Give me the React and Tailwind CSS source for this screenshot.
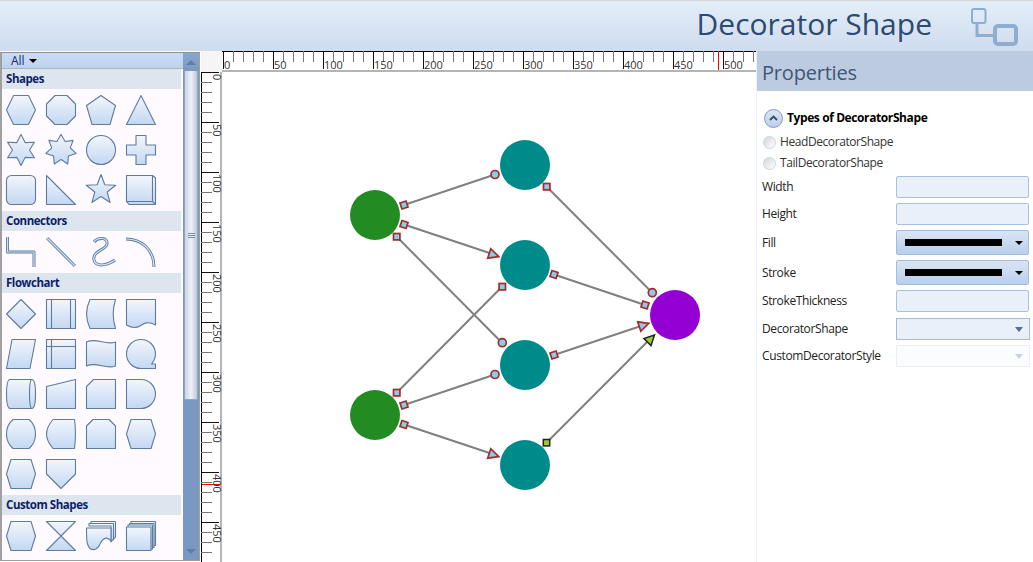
import { useId } from "react";

const UI_FONT = "font-['Open_Sans','Noto_Sans',sans-serif]";

/* Palette shape: children get the gradient through fill */
const Shape = ({ children }) => {
  const id = useId();
  return (
    <svg width="30" height="30" viewBox="0 0 30 30" className="overflow-visible">
      <defs>
        <linearGradient id={id} x1="0" y1="0" x2="0" y2="1">
          <stop offset="0" stopColor="#f3f6fc" />
          <stop offset="1" stopColor="#c3d8f2" />
        </linearGradient>
      </defs>
      <g fill={`url(#${id})`} stroke="#5d7c9f" strokeWidth="1.1" strokeLinejoin="round">
        {children}
      </g>
    </svg>
  );
};

const star = (n, outer, inner) => {
  const pts = [];
  for (let i = 0; i < n * 2; i++) {
    const r = i % 2 === 0 ? outer : inner;
    const a = (Math.PI * i) / n - Math.PI / 2;
    pts.push(`${(15 + r * Math.cos(a)).toFixed(2)},${(15 + r * Math.sin(a)).toFixed(2)}`);
  }
  return pts.join(" ");
};

const Pipe = ({ d }) => (
  <>
    <path d={d} fill="none" stroke="#5d7c9f" strokeWidth="3" />
    <path d={d} fill="none" stroke="#d3e2f5" strokeWidth="1.2" />
  </>
);

const basicShapes = [
  <polygon points="7.5,0.5 22.5,0.5 29.5,15 22.5,29.5 7.5,29.5 0.5,15" />,
  <polygon points="9,0.5 21,0.5 29.5,9 29.5,21 21,29.5 9,29.5 0.5,21 0.5,9" />,
  <polygon points="15,0.5 29.5,10.5 24,29.5 6,29.5 0.5,10.5" />,
  <polygon points="15,0.5 29.5,29.5 0.5,29.5" />,
  <polygon points={star(6, 15.5, 8.5)} />,
  <polygon points={star(7, 15.5, 9.5)} />,
  <circle cx="15" cy="15" r="14.5" />,
  <polygon points="10,0.5 20,0.5 20,10 29.5,10 29.5,20 20,20 20,29.5 10,29.5 10,20 0.5,20 0.5,10 10,10" />,
  <rect x="0.5" y="0.5" width="29" height="29" rx="5" />,
  <polygon points="0.5,0.5 29.5,29.5 0.5,29.5" />,
  <polygon points={star(5, 15.5, 6.5)} />,
  <>
    <polygon points="0.5,0.5 26.5,0.5 29.5,3 29.5,29.5 3,29.5 0.5,26.5" />
    <path d="M26.5 0.5V26.5H0.5M26.5 26.5L29.5 29.5" fill="none" />
  </>,
];

const connectorShapes = [
  <Pipe d="M1.5 0V15H28V30" />,
  <Pipe d="M1 1L29 29" />,
  <Pipe d="M8 5C12 0 22 0 21 7C20 13 6 14 8 23C10 31 22 28 29 23" />,
  <Pipe d="M0 2C15 2 28 12 28 30" />,
];

const flowShapes = [
  <polygon points="15,0.5 29.5,15 15,29.5 0.5,15" />,
  <>
    <rect x="0.5" y="0.5" width="29" height="29" />
    <path d="M5.5 0.5V29.5M24.5 0.5V29.5" fill="none" />
  </>,
  <path d="M4 0.5H29.5C26.5 10 26.5 20 29.5 29.5H4C-0.5 20 -0.5 10 4 0.5Z" />,
  <path d="M0.5 0.5H29.5V26C22 22 18 24 14 27C9 30 4 28 0.5 26Z" />,
  <polygon points="6,0.5 29.5,0.5 24,29.5 0.5,29.5" />,
  <>
    <rect x="0.5" y="0.5" width="29" height="29" />
    <path d="M5.5 0.5V29.5M0.5 7.5H29.5" fill="none" />
  </>,
  <path d="M0.5 3C10 -2 20 7 29.5 3V27C20 31 10 22 0.5 27Z" />,
  <path d="M15 29.5A14.5 14.5 0 1 1 29.5 15C29.5 19 28 22 25.5 25H29.5V29.5Z" />,
  <>
    <path d="M4 0.5H26C28.5 0.5 29.5 7 29.5 15C29.5 23 28.5 29.5 26 29.5H4C1.5 29.5 0.5 23 0.5 15C0.5 7 1.5 0.5 4 0.5Z" />
    <path d="M26 0.5C24 0.5 23.5 7 23.5 15C23.5 23 24 29.5 26 29.5" fill="none" />
  </>,
  <polygon points="0.5,7.5 29.5,0.5 29.5,29.5 0.5,29.5" />,
  <polygon points="7.5,0.5 29.5,0.5 29.5,29.5 0.5,29.5 0.5,7.5" />,
  <path d="M0.5 0.5H15A14.5 14.5 0 0 1 15 29.5H0.5Z" />,
  <path d="M7 0.5H23C26 3 29.5 7 29.5 15C29.5 23 26 27 23 29.5H7C4 27 0.5 23 0.5 15C0.5 7 4 3 7 0.5Z" />,
  <path d="M7 0.5H28.5C29.5 8 29.5 22 28.5 29.5H7C4 26 0.5 20 0.5 15C0.5 10 4 4 7 0.5Z" />,
  <polygon points="7,0.5 23,0.5 29.5,7 29.5,29.5 0.5,29.5 0.5,7" />,
  <polygon points="5,0.5 25,0.5 29.5,15 25,29.5 5,29.5 0.5,15" />,
  <polygon points="5,0.5 25,0.5 29.5,15 25,29.5 5,29.5 0.5,15" />,
  <polygon points="0.5,0.5 29.5,0.5 29.5,15 15,29.5 0.5,15" />,
];

const customShapes = [
  <polygon points="5,0.5 25,0.5 29.5,15 25,29.5 5,29.5 0.5,15" />,
  <polygon points="0.5,0.5 29.5,0.5 0.5,29.5 29.5,29.5" />,
  <>
    <path d="M5 0.5H29.5V16L27 19V3H5Z" />
    <path d="M3 2.5H27.5V18L25 21V5H3Z" />
    <path d="M0.5 7H25V20C21 15 17 17 14 23C11 30 4 31 1.5 23C0.5 20 0.5 12 0.5 7Z" />
  </>,
  <>
    <rect x="5" y="0.5" width="24.5" height="24" />
    <rect x="3.5" y="2.5" width="24.5" height="24" />
    <rect x="2" y="4" width="24.5" height="24" />
    <rect x="0.5" y="6" width="24.5" height="23.5" />
  </>,
];

const Section = ({ title, shapes }) => (
  <div>
    <div className="w-[179px] h-[20px] bg-[#dde5ef] pl-[4px] text-[11.5px] tracking-[-0.45px] leading-[20px] font-bold text-[#0d1f68]">
      {title}
    </div>
    <div className="pl-[4px] pt-[6px] pb-[6px] grid grid-cols-[repeat(4,30px)] gap-[10px]">
      {shapes.map((s, i) => (
        <Shape key={i}>{s}</Shape>
      ))}
    </div>
  </div>
);

const Scrollbar = () => (
  <div className="w-[16px] shrink-0 flex flex-col bg-[#7a99c2]">
    <div className="h-[18px] flex items-center justify-center bg-gradient-to-b from-[#8aa6cc] to-[#7a99c2]">
      <div className="w-0 h-0 border-x-[5px] border-x-transparent border-b-[5px] border-b-[#5f7da8]" />
    </div>
    <div className="h-[329px] mx-[1px] flex items-center justify-center bg-gradient-to-r from-[#c9d3e2] via-[#eef1f6] to-[#bcc9db] border-x border-b border-[#8fa5c4]">
      <div className="w-[7px] h-[5px] border-y border-[#7e8ea5] flex items-center">
        <div className="w-full h-px bg-[#7e8ea5]" />
      </div>
    </div>
    <div className="flex-1" />
    <div className="h-[18px] flex items-center justify-center">
      <div className="w-0 h-0 border-x-[5px] border-x-transparent border-t-[5px] border-t-[#5f7da8]" />
    </div>
  </div>
);

const Palette = () => (
  <div className="w-[200px] h-[509px] mt-[1px] border-2 border-r border-b border-[#a0a0a0] border-t-[#909090] border-t flex bg-[#fffaff] overflow-hidden">
    <div className="w-[181px]">
      <div className="h-[15px] pl-[9px] flex items-center gap-[4px] bg-gradient-to-b from-[#c9dcf4] to-[#bfd3ee] text-[12px] text-[#15267a]">
        All
        <span className="w-0 h-0 border-x-[4px] border-x-transparent border-t-[4px] border-t-black" />
      </div>
      <div className="h-px bg-[#a9b4c4]" />
      <Section title="Shapes" shapes={basicShapes} />
      <Section title="Connectors" shapes={connectorShapes} />
      <Section title="Flowchart" shapes={flowShapes} />
      <Section title="Custom Shapes" shapes={customShapes} />
    </div>
    <Scrollbar />
  </div>
);

const TOP_LABELS = [0, 50, 100, 150, 200, 250, 300, 350, 400, 450, 500];
const LEFT_LABELS = [0, 50, 100, 150, 200, 250, 300, 350, 400, 450];

const TopRuler = () => {
  const ticks = [];
  for (let v = 0; v <= 530; v += 10) ticks.push(v);
  return (
    <svg width="535" height="21" viewBox="222 51 535 21" className="block overflow-visible">
      <rect x="222" y="70" width="535" height="2" fill="#b5b5b5" />
      <rect x="222" y="51" width="535" height="1" fill="#000" />
      {ticks.map((v) => (
        <rect key={v} x={223 + v} y="51" width="1" height={v % 50 === 0 ? 18 : 11} fill={v % 50 === 0 ? "#111" : "#777"} />
      ))}
      <rect x="718" y="51" width="1" height="19" fill="#f00" />
      {TOP_LABELS.map((v) => (
        <text key={v} x={224 + v} y="69" fontSize="11" fill="#333">
          {v}
        </text>
      ))}
    </svg>
  );
};

const LeftRuler = () => {
  const ticks = [];
  for (let v = 0; v <= 490; v += 10) ticks.push(v);
  return (
    <svg width="21" height="490" viewBox="201 72 21 490" className="block shrink-0 overflow-visible">
      <rect x="201" y="72" width="1" height="490" fill="#000" />
      <rect x="220" y="72" width="2" height="490" fill="#b5b5b5" />
      {ticks.map((v) => (
        <rect key={v} x="201" y={72 + v} width={v % 50 === 0 ? 18 : 11} height="1" fill={v % 50 === 0 ? "#111" : "#777"} />
      ))}
      <rect x="202" y="484" width="18" height="1" fill="#f00" />
      {LEFT_LABELS.map((v) => (
        <text key={v} fontSize="11" fill="#333" transform={`translate(212.5 ${v + 74}) rotate(90)`}>
          {v}
        </text>
      ))}
    </svg>
  );
};

const RED = { fill: "#87ceeb", stroke: "#a52a2a", strokeWidth: 1.7 };
const LIME = { fill: "#9acd32", stroke: "#222", strokeWidth: 1.5 };

const Square = ({ x, y, c = RED }) => <rect x={x - 3.2} y={y - 3.2} width="6.4" height="6.4" {...c} />;
const Dot = ({ x, y }) => <circle cx={x} cy={y} r="4" {...RED} />;
const Diamond = ({ x, y, a }) => (
  <rect x={x - 3.2} y={y - 3.2} width="6.4" height="6.4" transform={`rotate(${a} ${x} ${y})`} {...RED} />
);
const Arrow = ({ x, y, a, c = RED }) => (
  <polygon points="5,0 -5,-5 -5,5" transform={`translate(${x} ${y}) rotate(${a})`} {...c} strokeLinejoin="miter" />
);

const lines = [
  [404, 205, 495, 174.5],
  [404, 224.5, 494, 254.5],
  [396.7, 236.7, 502, 342.7],
  [502, 286.7, 396.7, 392.7],
  [404, 405, 495, 374.5],
  [404, 424.5, 494, 454.5],
  [546.7, 186.7, 652.3, 292.7],
  [554, 274.5, 645, 305],
  [554, 355, 644, 325],
  [546.5, 442.7, 651, 338],
];

const Canvas = () => (
  <svg width="534" height="490" viewBox="222 72 534 490" className="block">
    {lines.map(([a, b, c, d], i) => (
      <line key={i} x1={a} y1={b} x2={c} y2={d} stroke="#808080" strokeWidth="2" />
    ))}
    <circle cx="375" cy="215" r="25" fill="#228b22" />
    <circle cx="375" cy="415" r="25" fill="#228b22" />
    <circle cx="525" cy="165" r="25" fill="#008b8b" />
    <circle cx="525" cy="265" r="25" fill="#008b8b" />
    <circle cx="525" cy="365" r="25" fill="#008b8b" />
    <circle cx="525" cy="465" r="25" fill="#008b8b" />
    <circle cx="675" cy="315" r="25" fill="#9400d3" />

    <Diamond x={404} y={205} a={-18} />
    <Dot x={495} y={174.5} />
    <Diamond x={404} y={224.5} a={18} />
    <Arrow x={494} y={255} a={18} />
    <Square x={396.7} y={236.7} />
    <Dot x={502.3} y={342.7} />
    <Square x={502.3} y={286.7} />
    <Square x={396.7} y={392.7} />
    <Diamond x={404} y={405} a={-18} />
    <Dot x={495} y={374.5} />
    <Diamond x={404} y={424.5} a={18} />
    <Arrow x={494} y={455} a={18} />
    <Square x={546.7} y={186.7} />
    <Dot x={652.3} y={292.7} />
    <Diamond x={554} y={274.5} a={18} />
    <Diamond x={645} y={305} a={18} />
    <Diamond x={554} y={355} a={-18} />
    <Arrow x={644} y={325} a={-18} />
    <Square x={546.5} y={442.7} c={LIME} />
    <Arrow x={651} y={338.5} a={-45} c={LIME} />
  </svg>
);

const Field = ({ label, h = "h-[22px]", mt, children }) => (
  <div className={`flex items-center justify-between pl-[5px] pr-[4px] ${h} ${mt}`}>
    <span className="text-[12px] tracking-[-0.38px] text-[#222]">{label}</span>
    {children}
  </div>
);

const TextBox = () => (
  <div className="w-[133px] h-full rounded-[2px] border border-[#a9c0e0] bg-[#e9f0fa]" />
);

const ColorBox = () => (
  <div className="w-[133px] h-full rounded-[2px] border border-[#a3bbdd] bg-gradient-to-b from-[#dbe5f2] to-[#b8cfee] flex items-center pl-[8px] pr-[5px] justify-between">
    <div className="w-[97px] h-[7px] bg-black" />
    <div className="w-0 h-0 border-x-[4px] border-x-transparent border-t-[4px] border-t-black" />
  </div>
);

const Combo = ({ disabled }) => (
  <div
    className={`w-[134px] -mr-[1px] h-full flex items-center justify-end pr-[6px] border ${
      disabled ? "border-[#eaeff7] bg-[#fbfcfe]" : "border-[#a3bbdd] bg-[#e9f0fa]"
    }`}
  >
    <div
      className={`w-0 h-0 border-x-[4px] border-x-transparent border-t-[5px] ${
        disabled ? "border-t-[#c9d2df]" : "border-t-[#4f6f9c]"
      }`}
    />
  </div>
);

const Radio = ({ label, mt }) => (
  <div className={`flex items-center pl-[6px] h-[16px] ${mt}`}>
    <div className="w-[13px] h-[13px] rounded-full border border-[#c6d7ec] bg-gradient-to-br from-[#d6d6d6] to-white" />
    <span className="ml-[4px] text-[12px] tracking-[-0.42px] text-[#333]">{label}</span>
  </div>
);

const Properties = () => (
  <div className="flex-1 flex flex-col border-l border-[#eaf3fc] -ml-[1px]">
    <div className="h-[40px] bg-[#bccbdf] pl-[5px] text-[20px] tracking-[-0.2px] leading-[44px] text-[#3d5778]">Properties</div>
    <div className="flex items-center pl-[7px] mt-[17px] h-[20px]">
      <div className="w-[19px] h-[19px] rounded-full border border-[#7f9cc6] bg-gradient-to-b from-[#dae5f4] to-[#bcd0ec] flex items-center justify-center">
        <svg width="9" height="6" viewBox="0 0 9 6">
          <path d="M1 5L4.5 1.5L8 5" fill="none" stroke="#33496b" strokeWidth="1.8" />
        </svg>
      </div>
      <span className="ml-[4px] text-[12px] tracking-[-0.4px] font-bold text-black">Types of DecoratorShape</span>
    </div>
    <Radio label="HeadDecoratorShape" mt="mt-[6px]" />
    <Radio label="TailDecoratorShape" mt="mt-[5px]" />
    <Field label="Width" mt="mt-[5px]"><TextBox /></Field>
    <Field label="Height" mt="mt-[5px]"><TextBox /></Field>
    <Field label="Fill" h="h-[25px]" mt="mt-[5px]"><ColorBox /></Field>
    <Field label="Stroke" h="h-[25px]" mt="mt-[5px]"><ColorBox /></Field>
    <Field label="StrokeThickness" mt="mt-[5px]"><TextBox /></Field>
    <Field label="DecoratorShape" mt="mt-[6px]"><Combo /></Field>
    <Field label="CustomDecoratorStyle" mt="mt-[5px]"><Combo disabled /></Field>
  </div>
);

export default function App() {
  return (
    <div className={`w-[1033px] h-[562px] flex flex-col overflow-hidden bg-white ${UI_FONT}`}>
      {/* Header */}
      <div className="h-[51px] shrink-0 flex items-center justify-end border-t border-[#d8d8d8] bg-gradient-to-b from-[#e4eefa] to-[#cfdcee]">
        <span className="text-[30px] text-[#2d4a6f] -mt-[5px]">Decorator Shape</span>
        <svg width="52" height="42" viewBox="0 0 52 42" className="ml-[36px] mr-[13px]">
          <rect x="4" y="4" width="13.5" height="14" rx="2" fill="none" stroke="#8fadd0" strokeWidth="2" />
          <path d="M9 19V30.5H25" fill="none" stroke="#8fadd0" strokeWidth="3" />
          <rect x="27" y="21" width="21" height="18" rx="3" fill="none" stroke="#8fadd0" strokeWidth="4" />
        </svg>
      </div>

      <div className="flex-1 flex min-h-0">
        <Palette />
        <div className="w-[556px] ml-[1px] flex flex-col shrink-0">
          <div className="h-[21px] flex">
            <div className="w-[21px] bg-[#f5f5f5]" />
            <TopRuler />
          </div>
          <div className="flex">
            <LeftRuler />
            <Canvas />
          </div>
        </div>
        <Properties />
      </div>
    </div>
  );
}
